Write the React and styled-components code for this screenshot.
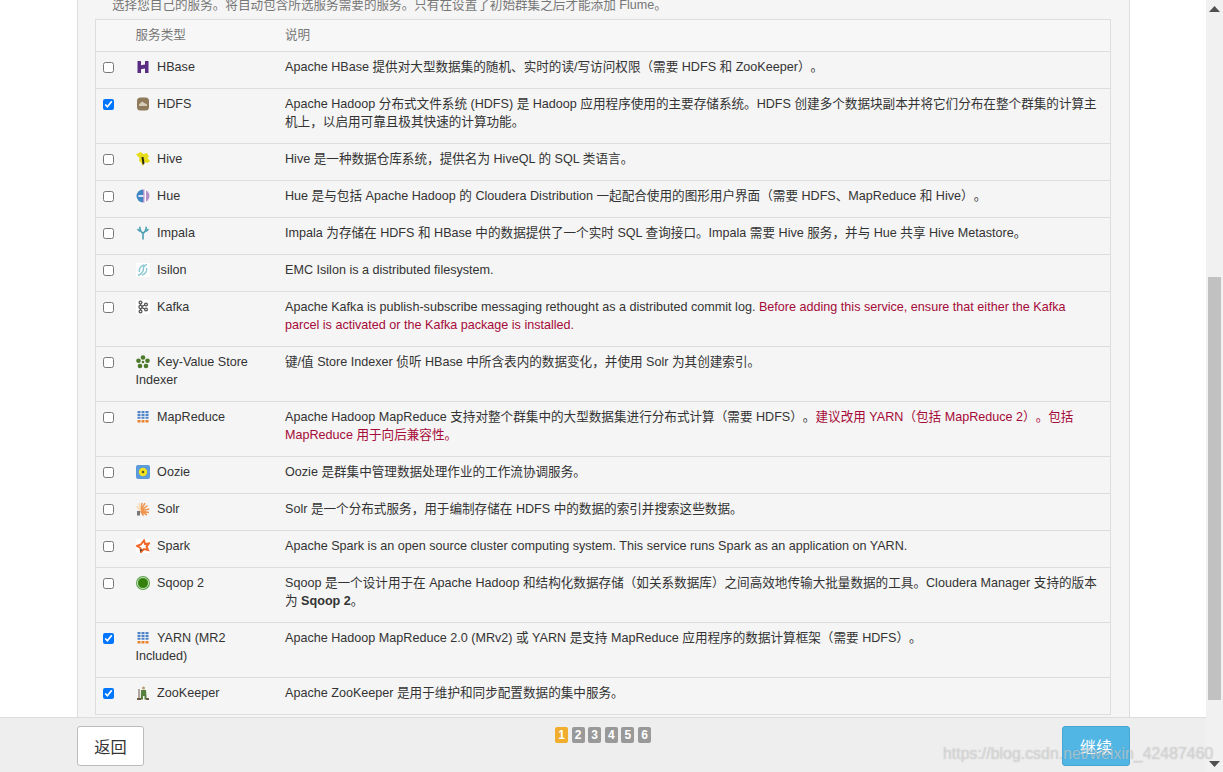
import React, { useLayoutEffect, useRef } from "react";
import styled, { createGlobalStyle } from "styled-components";

const GlobalStyle = createGlobalStyle`
  html, body {
    margin: 0;
    height: 100%;
    overflow: hidden;
    background: #fff;
  }
  #root {
    height: 100%;
  }
`;

const Page = styled.div`
  display: flex;
  height: 100vh;
  font-family: "Liberation Sans", "Noto Sans CJK SC", sans-serif;
  font-size: 12.6px;
  line-height: 18px;
  color: #333;
  text-spacing-trim: space-all;
`;

const Main = styled.div`
  position: relative;
  flex: 1;
  min-width: 0;
`;

const Scroller = styled.div`
  height: 100%;
  overflow: hidden;
`;

const Panel = styled.div`
  width: 1053px;
  margin-left: 77px;
  padding: 470px 17px 158px 17px;
  box-sizing: border-box;
  background: #f5f5f5;
  border-left: 1px solid #ddd;
  border-right: 1px solid #ddd;
`;

const Intro = styled.p`
  margin: 0 0 5px 17px;
  height: 18px;
  color: #777;
`;

const Table = styled.table`
  width: 1016px;
  table-layout: fixed;
  border-collapse: collapse;
  border: 1px solid #ddd;
`;

const HeadCell = styled.th`
  height: 29px;
  padding: 0 8px 2px;
  text-align: left;
  font-weight: normal;
  color: #777;
  background: #f7f7f7;
`;

const Row = styled.tr`
  border-top: 1px solid #ddd;
`;

const Cell = styled.td`
  padding: 6px 8px 12px;
  vertical-align: top;
`;

const CheckCell = styled(Cell)`
  padding: 10px 0 0 7px;
`;

const Check = styled.input`
  display: block;
  width: 11px;
  height: 11px;
  margin: 0;
`;

const IconBox = styled.span`
  display: inline-block;
  width: 14px;
  height: 14px;
  margin-right: 7.6px;
  vertical-align: -3px;
  background: ${(p) => (p.$plate ? "#fff" : "transparent")};
`;

const IconSvg = styled.svg`
  display: block;
  width: 14px;
  height: 14px;
`;

const Warn = styled.span`
  color: #a60a38;
`;

const Footer = styled.div`
  position: absolute;
  left: 0;
  right: 0;
  bottom: 0;
  height: 55px;
  padding: 8px 76px 7px 77px;
  display: flex;
  justify-content: space-between;
  align-items: flex-start;
  box-sizing: border-box;
  background: #eee;
  border-top: 1px solid #ddd;
`;

const Button = styled.button`
  width: ${(p) => p.$width}px;
  height: 40px;
  padding: 0;
  font-family: inherit;
  font-size: 16.2px;
  border-radius: 3px;
  border: 1px solid ${(p) => (p.$primary ? "#46a5d2" : "#bbb")};
  background: ${(p) => (p.$primary ? "#52b6e4" : "#fff")};
  color: ${(p) => (p.$primary ? "#fff" : "#333")};
`;

const Pager = styled.div`
  display: flex;
  gap: 3.6px;
  margin-top: 1px;
`;

const PageDot = styled.span`
  width: 13px;
  height: 16px;
  border-radius: 2px;
  text-align: center;
  font-size: 12px;
  font-weight: bold;
  line-height: 16px;
  color: #fff;
  background: ${(p) => (p.$active ? "#f0ad2e" : "#999")};
`;

const Rail = styled.div`
  width: 17px;
  flex: none;
  display: flex;
  flex-direction: column;
  background: #f1f1f1;
`;

const RailButton = styled.div`
  height: 17px;
  flex: none;
  display: flex;
  align-items: center;
  justify-content: center;
`;

const RailTrack = styled.div`
  flex: 1;
  padding: 260px 2px 0;
`;

const RailThumb = styled.div`
  height: 423px;
  background: #c1c1c1;
`;

const Arrow = styled.svg`
  width: 11px;
  height: 6px;
  transform: ${(p) => (p.$down ? "scaleY(-1)" : "none")};
`;

const Watermark = styled.div`
  position: absolute;
  left: 943px;
  bottom: 8px;
  font-family: "Liberation Sans", sans-serif;
  font-size: 15.9px;
  line-height: 20px;
  white-space: nowrap;
  pointer-events: none;
  color: rgba(255, 255, 255, 0.45);
  text-shadow: 0 0 1px rgba(90, 90, 90, 0.45);
`;

const icons = {
  hbase: (
    <path fill="#5b2d82" d="M1.500 1H5v4.200L9 4.500V1h3.500v12H9V8.500L5 9.200V13H1.500z" />
  ),
  hdfs: (
    <>
      <rect x="1" y="0.500" width="12" height="13" rx="3.500" fill="#8f7a5b" />
      <path fill="#d8cdb8" d="M3 7.500 6 4.500l5 3v1.500H3z" />
    </>
  ),
  hive: (
    <>
      <path fill="#e6dc1a" d="M0 2.500 4.500 0l3 2L11 1l2 3.500-1.500 1.500 2.500 3-2.500 2-3-1L7 14l-2-3.500L3 9l.5-3z" />
      <path fill="#2b2a10" d="M5.500 5H7.500l1 6.500-1.800 1.500-.5-3z" />
    </>
  ),
  hue: (
    <>
      <path fill="#3f87c4" d="M7 .5a6.500 6.500 0 0 0 0 13z" />
      <path fill="#b58fc9" d="M7 .5a6.500 6.500 0 0 1 0 13z" />
      <path fill="#fff" d="M2.500 6.200h5v1.600h-5z" />
      <path fill="#fff" d="M8.500 1h1.500v12H8.500z" />
    </>
  ),
  impala: (
    <path fill="none" stroke="#4a9fb5" strokeWidth="1.600" d="M3.800 .8c0 3.500.8 5 3.200 6.500 2.400-1.500 3.200-3 3.200-6.500M7 7v6.500M1.500 3 4 5.500M12.500 3 10 5.500" />
  ),
  isilon: (
    <path fill="none" stroke="#8cc9d3" strokeWidth="1.500" d="M11 1.500C6 2.500 8 6 7 8s-3 4-5 4.500M3.500 9C2.500 6 5 2.500 8 2M10.500 5c1 3-1.500 6.500-4.500 7" />
  ),
  kafka: (
    <g fill="none" stroke="#555" strokeWidth="1.300">
      <circle cx="4.500" cy="2.500" r="1.400" />
      <circle cx="4.500" cy="7" r="1.600" />
      <circle cx="4.500" cy="11.500" r="1.400" />
      <circle cx="10" cy="4.500" r="1.400" />
      <circle cx="10" cy="9.500" r="1.400" />
      <path d="M4.500 4v1.500M4.500 8.500V10M6 6.300 8.800 5M6 7.700 8.800 9" />
    </g>
  ),
  kv: (
    <g fill="#4c7a2a">
      <circle cx="7" cy="2.500" r="2.300" />
      <circle cx="2.500" cy="5.700" r="2.300" />
      <circle cx="11.500" cy="5.700" r="2.300" />
      <circle cx="4" cy="11" r="2.300" />
      <circle cx="10" cy="11" r="2.300" />
      <circle cx="7" cy="7" r="1.300" />
    </g>
  ),
  mapreduce: (
    <g>
      <path fill="#4f83c9" d="M1.500 1h3v2.200h-3zM5.500 1h3v2.200h-3zM9.500 1h3v2.200h-3zM1.500 4h3v2.200h-3zM5.500 4h3v2.200h-3zM9.500 4h3v2.200h-3zM1.500 7h3v1.800h-3zM5.500 7h3v1.800h-3zM9.500 7h3v1.800h-3z" />
      <path fill="#e8842c" d="M1.500 10h3v2.500h-3zM5.500 10h3v2.500h-3zM9.500 10h3v2.500h-3z" />
    </g>
  ),
  oozie: (
    <>
      <rect x="0" y="0" width="14" height="14" rx="2" fill="#5a9bdc" />
      <circle cx="7" cy="7" r="4.200" fill="#f3e21d" />
      <circle cx="7" cy="7" r="1.300" fill="#4d5a2a" />
    </>
  ),
  solr: (
    <>
      <path fill="none" stroke="#ee9550" strokeWidth="1.500" d="M4.500 9 6 .8M4.500 9 9 1.200M4.500 9l7-5.500M4.500 9l8.800-2M4.500 9l8.500 1.500M4.500 9l6.500 4M4.500 9l3 4.800" />
      <path fill="none" stroke="#f8dbb4" strokeWidth="1.500" d="M4.500 9 3 1.200M4.500 9 .5 4" />
      <path fill="#777" d="M1 9h3v4.500H1z" />
    </>
  ),
  spark: (
    <>
      <path fill="none" stroke="#f0682a" strokeWidth="2" d="M8 1.500 9 5l4-.5-2.500 3 1.500 3.500-4-1L5 13l-.5-4L1 7l3.800-1.500z" />
      <path fill="#333" d="M4 10.500h3L5 12l-.5 1.500z" />
    </>
  ),
  sqoop: (
    <>
      <circle cx="7" cy="7" r="7" fill="#5aa348" />
      <circle cx="7" cy="7" r="5.500" fill="none" stroke="#d6ead0" strokeWidth="0.900" />
      <circle cx="7" cy="7" r="4.800" fill="#357f0c" />
    </>
  ),
  zookeeper: (
    <>
      <circle cx="7.500" cy="2" r="1.500" fill="#b89a72" />
      <path fill="#55803f" d="M5 4h5l.5 6v3.500H8.500V10H7v3.500H4.800z" />
      <path fill="#6a5a45" d="M2.500 3h1v9h-1zM1 12h4v2H1zM10 12h3v2h-3z" />
    </>
  ),
};

const ServiceIcon = ({ name, plate }) => (
  <IconBox $plate={plate}>
    <IconSvg viewBox="0 0 14 14">{icons[name]}</IconSvg>
  </IconBox>
);

const services = [
  { icon: "hbase", name: "HBase", desc: "Apache HBase 提供对大型数据集的随机、实时的读/写访问权限（需要 HDFS 和 ZooKeeper）。" },
  { icon: "hdfs", name: "HDFS", checked: true, desc: "Apache Hadoop 分布式文件系统 (HDFS) 是 Hadoop 应用程序使用的主要存储系统。HDFS 创建多个数据块副本并将它们分布在整个群集的计算主机上，以启用可靠且极其快速的计算功能。" },
  { icon: "hive", name: "Hive", desc: "Hive 是一种数据仓库系统，提供名为 HiveQL 的 SQL 类语言。" },
  { icon: "hue", name: "Hue", desc: "Hue 是与包括 Apache Hadoop 的 Cloudera Distribution 一起配合使用的图形用户界面（需要 HDFS、MapReduce 和 Hive）。" },
  { icon: "impala", name: "Impala", desc: "Impala 为存储在 HDFS 和 HBase 中的数据提供了一个实时 SQL 查询接口。Impala 需要 Hive 服务，并与 Hue 共享 Hive Metastore。" },
  { icon: "isilon", plate: true, name: "Isilon", desc: "EMC Isilon is a distributed filesystem." },
  { icon: "kafka", plate: true, name: "Kafka", desc: "Apache Kafka is publish-subscribe messaging rethought as a distributed commit log. ", warn: "Before adding this service, ensure that either the Kafka parcel is activated or the Kafka package is installed." },
  { icon: "kv", name: "Key-Value Store Indexer", desc: "键/值 Store Indexer 侦听 HBase 中所含表内的数据变化，并使用 Solr 为其创建索引。" },
  { icon: "mapreduce", name: "MapReduce", desc: "Apache Hadoop MapReduce 支持对整个群集中的大型数据集进行分布式计算（需要 HDFS）。", warn: "建议改用 YARN（包括 MapReduce 2）。包括 MapReduce 用于向后兼容性。" },
  { icon: "oozie", name: "Oozie", desc: "Oozie 是群集中管理数据处理作业的工作流协调服务。" },
  { icon: "solr", name: "Solr", desc: "Solr 是一个分布式服务，用于编制存储在 HDFS 中的数据的索引并搜索这些数据。" },
  { icon: "spark", plate: true, name: "Spark", desc: "Apache Spark is an open source cluster computing system. This service runs Spark as an application on YARN." },
  { icon: "sqoop", name: "Sqoop 2", desc: "Sqoop 是一个设计用于在 Apache Hadoop 和结构化数据存储（如关系数据库）之间高效地传输大批量数据的工具。Cloudera Manager 支持的版本为 ", strong: "Sqoop 2", tail: "。" },
  { icon: "mapreduce", name: "YARN (MR2 Included)", checked: true, desc: "Apache Hadoop MapReduce 2.0 (MRv2) 或 YARN 是支持 MapReduce 应用程序的数据计算框架（需要 HDFS）。" },
  { icon: "zookeeper", name: "ZooKeeper", checked: true, desc: "Apache ZooKeeper 是用于维护和同步配置数据的集中服务。" },
];

const App = () => {
  const scroller = useRef(null);

  useLayoutEffect(() => {
    scroller.current.scrollTop = 474;
  }, []);

  return (
    <Page>
      <GlobalStyle />
      <Main>
        <Scroller ref={scroller}>
          <Panel>
            <Intro>选择您自己的服务。将自动包含所选服务需要的服务。只有在设置了初始群集之后才能添加 Flume。</Intro>
            <Table>
              <colgroup>
                <col width="32" />
                <col width="149.500" />
                <col />
              </colgroup>
              <thead>
                <tr>
                  <HeadCell />
                  <HeadCell>服务类型</HeadCell>
                  <HeadCell>说明</HeadCell>
                </tr>
              </thead>
              <tbody>
                {services.map((item) => (
                  <Row key={item.name}>
                    <CheckCell>
                      <Check type="checkbox" defaultChecked={item.checked} />
                    </CheckCell>
                    <Cell>
                      <ServiceIcon name={item.icon} plate={item.plate} />
                      {item.name}
                    </Cell>
                    <Cell>
                      {item.desc}
                      {item.warn && <Warn>{item.warn}</Warn>}
                      {item.strong && <strong>{item.strong}</strong>}
                      {item.tail}
                    </Cell>
                  </Row>
                ))}
              </tbody>
            </Table>
          </Panel>
        </Scroller>
        <Footer>
          <Button $width={67}>返回</Button>
          <Pager>
            <PageDot $active>1</PageDot>
            <PageDot>2</PageDot>
            <PageDot>3</PageDot>
            <PageDot>4</PageDot>
            <PageDot>5</PageDot>
            <PageDot>6</PageDot>
          </Pager>
          <Button $primary $width={68}>继续</Button>
        </Footer>
        <Watermark>https://blog.csdn.net/weixin_42487460</Watermark>
      </Main>
      <Rail>
        <RailButton>
          <Arrow viewBox="0 0 11 6"><path fill="#505050" d="M5.500 0 11 6H0z" /></Arrow>
        </RailButton>
        <RailTrack>
          <RailThumb />
        </RailTrack>
        <RailButton>
          <Arrow $down viewBox="0 0 11 6"><path fill="#505050" d="M5.500 0 11 6H0z" /></Arrow>
        </RailButton>
      </Rail>
    </Page>
  );
};

export default App;
